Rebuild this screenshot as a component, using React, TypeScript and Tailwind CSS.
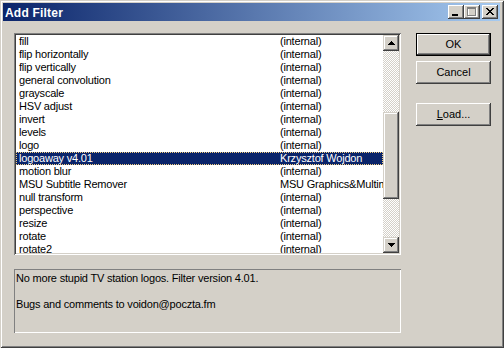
import React from "react";

const raised =
  "shadow-[inset_-1px_-1px_#404040,inset_1px_1px_#d4d0c8,inset_-2px_-2px_#808080,inset_2px_2px_#ffffff]";
const btn =
  "shadow-[inset_-1px_-1px_#404040,inset_1px_1px_#ffffff,inset_-2px_-2px_#808080]";

const rows: [string, string][] = [
  ["fill", "(internal)"],
  ["flip horizontally", "(internal)"],
  ["flip vertically", "(internal)"],
  ["general convolution", "(internal)"],
  ["grayscale", "(internal)"],
  ["HSV adjust", "(internal)"],
  ["invert", "(internal)"],
  ["levels", "(internal)"],
  ["logo", "(internal)"],
  ["logoaway v4.01", "Krzysztof Wojdon"],
  ["motion blur", "(internal)"],
  ["MSU Subtitle Remover", "MSU Graphics&Multimedia Lab"],
  ["null transform", "(internal)"],
  ["perspective", "(internal)"],
  ["resize", "(internal)"],
  ["rotate", "(internal)"],
  ["rotate2", "(internal)"],
];

function Arrow({ down }: { down?: boolean }) {
  const r = [0, 1, 2, 3];
  return (
    <svg width="7" height="4" viewBox="0 0 7 4" shapeRendering="crispEdges">
      {r.map((i) => {
        const y = down ? i : 3 - i;
        const w = 7 - 2 * i;
        return <rect key={i} x={i} y={y} width={w} height={1} fill="#000" />;
      })}
    </svg>
  );
}

function CloseGlyph() {
  const px: [number, number][] = [];
  const pat = [
    "XX....XX",
    ".XX..XX.",
    "..XXXX..",
    "...XX...",
    "..XXXX..",
    ".XX..XX.",
    "XX....XX",
  ];
  pat.forEach((row, y) =>
    row.split("").forEach((c, x) => {
      if (c === "X") px.push([x, y]);
    })
  );
  return (
    <svg width="8" height="7" viewBox="0 0 8 7" shapeRendering="crispEdges">
      {px.map(([x, y]) => (
        <rect key={`${x}-${y}`} x={x} y={y} width={1} height={1} fill="#000" />
      ))}
    </svg>
  );
}

export default function App() {
  return (
    <div className="w-[504px] h-[348px] bg-[#d4d0c8] p-[3px] flex flex-col font-['Liberation_Sans',Arial,sans-serif] text-[11px] text-black shadow-[inset_1px_1px_#d4d0c8,inset_-1px_-1px_#404040,inset_2px_2px_#ffffff,inset_-2px_-2px_#808080] overflow-hidden">
      {/* Title bar */}
      <div className="h-[18px] w-[497px] flex items-center pl-[2px] pr-[2px] bg-[linear-gradient(to_right,#0a246a,#a6caf0)]">
        <span className="flex-1 text-white font-bold text-[12px] tracking-[0.2px] leading-[18px] pt-[1px]">
          Add Filter
        </span>
        <div className="flex items-center">
          <div className={`w-[16px] h-[14px] bg-[#d4d0c8] ${btn} relative`}>
            <div className="absolute left-[4px] top-[9px] w-[6px] h-[2px] bg-black" />
          </div>
          <div className={`w-[16px] h-[14px] bg-[#d4d0c8] ${btn} relative`}>
            <svg className="absolute left-[3px] top-[2px]" width="10" height="10" viewBox="0 0 10 10" shapeRendering="crispEdges">
              <rect x="1.5" y="1.5" width="8" height="8" fill="none" stroke="#ffffff" />
              <rect x="1" y="1" width="9" height="1" fill="#ffffff" />
              <rect x="0.5" y="0.5" width="8" height="8" fill="none" stroke="#808080" />
              <rect x="0" y="1" width="9" height="1" fill="#808080" />
            </svg>
          </div>
          <div className={`ml-[2px] w-[16px] h-[14px] bg-[#d4d0c8] ${btn} flex items-center justify-center pb-[1px]`}>
            <CloseGlyph />
          </div>
        </div>
      </div>

      {/* Client */}
      <div className="flex pl-[11px] pt-[12px]">
        <div className="w-[387px] flex flex-col">
          {/* List box */}
          <div className="h-[222px] bg-white p-[2px] flex shadow-[inset_1px_1px_#808080,inset_-1px_-1px_#ffffff,inset_2px_2px_#404040,inset_-2px_-2px_#d4d0c8]">
            <div className="flex-1 overflow-hidden tracking-[-0.2px]">
              {rows.map(([a, b], i) => {
                const sel = i === 9;
                return (
                  <div
                    key={a}
                    className={
                      sel
                        ? "h-[13px] flex items-center whitespace-nowrap bg-[#0a246a] text-white border border-dotted border-[#f2cd7e]"
                        : "h-[13px] flex items-center whitespace-nowrap"
                    }
                  >
                    <span className={sel ? "w-[263px] pl-[2px] leading-[11px] shrink-0" : "w-[264px] pl-[3px] leading-[13px] shrink-0"}>
                      {a}
                    </span>
                    <span className={sel ? "leading-[11px]" : "leading-[13px]"}>{b}</span>
                  </div>
                );
              })}
            </div>
            <div className="w-[16px] flex flex-col">
              <div className={`h-[16px] bg-[#d4d0c8] ${raised} flex items-center justify-center pb-[1px]`}>
                <Arrow />
              </div>
              <div className="flex-1 bg-[repeating-conic-gradient(#d4d0c8_0%_25%,#ffffff_0%_50%)] bg-[length:2px_2px]">
                <div className={`mt-[61px] h-[87px] bg-[#d4d0c8] ${raised}`} />
              </div>
              <div className={`h-[16px] bg-[#d4d0c8] ${raised} flex items-center justify-center pb-[1px]`}>
                <Arrow down />
              </div>
            </div>
          </div>

          {/* Description */}
          <div className="mt-[14px] h-[64px] pt-[3px] pl-[2px] leading-[13px] tracking-[-0.2px] shadow-[inset_1px_1px_#808080,inset_-1px_-1px_#ffffff]">
            <div>No more stupid TV station logos. Filter version 4.01.</div>
            <div className="h-[13px]" />
            <div>Bugs and comments to voidon@poczta.fm</div>
          </div>
        </div>

        {/* Buttons */}
        <div className="ml-[15px] w-[75px] flex flex-col">
          <div className={`h-[23px] border border-black bg-[#d4d0c8] ${btn} flex items-center justify-center`}>
            OK
          </div>
          <div className={`mt-[5px] h-[23px] bg-[#d4d0c8] ${btn} flex items-center justify-center`}>
            Cancel
          </div>
          <div className={`mt-[19px] h-[23px] bg-[#d4d0c8] ${btn} flex items-center justify-center`}>
            <span>
              <span className="underline underline-offset-[1px]">L</span>oad...
            </span>
          </div>
        </div>
      </div>
    </div>
  );
}
